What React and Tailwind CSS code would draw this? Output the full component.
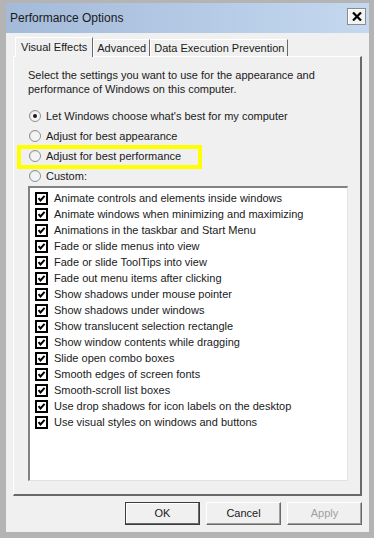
import React from 'react';

const FONT = { fontFamily: '"Liberation Sans", Arial, sans-serif' };

const effects = [
  'Animate controls and elements inside windows',
  'Animate windows when minimizing and maximizing',
  'Animations in the taskbar and Start Menu',
  'Fade or slide menus into view',
  'Fade or slide ToolTips into view',
  'Fade out menu items after clicking',
  'Show shadows under mouse pointer',
  'Show shadows under windows',
  'Show translucent selection rectangle',
  'Show window contents while dragging',
  'Slide open combo boxes',
  'Smooth edges of screen fonts',
  'Smooth-scroll list boxes',
  'Use drop shadows for icon labels on the desktop',
  'Use visual styles on windows and buttons',
];

const radios = [
  { label: "Let Windows choose what's best for my computer", checked: true },
  { label: 'Adjust for best appearance' },
  { label: 'Adjust for best performance' },
  { label: 'Custom:' },
];

// radio circle, windows 7 style
const Radio = ({ checked }) => (
  <span className="w-[12px] h-[12px] rounded-full border border-[#8e8f8f] bg-gradient-to-br from-[#dcdcdc] to-[#ffffff] flex items-center justify-center shrink-0">
    <span className="w-[8px] h-[8px] rounded-full bg-[#f4f4f4] flex items-center justify-center">
      {checked && <span className="w-[4px] h-[4px] rounded-full bg-[#1a1a1a]" />}
    </span>
  </span>
);

const CheckBox = () => (
  <svg width="13" height="13" viewBox="0 0 13 13" className="shrink-0">
    <rect x="1" y="1" width="11" height="11" fill="#fff" stroke="#000" strokeWidth="2" />
    <path d="M3.5 6.2 L5.5 8.5 L9.6 3.8" fill="none" stroke="#000" strokeWidth="2" />
  </svg>
);

const Tab = ({ label, active }) => (
  <div
    className={
      active
        ? 'h-[20px] px-[5px] flex items-center bg-[#f0f0f0] border-t border-l border-white border-r border-r-[#696969] -mb-px relative z-10 ml-[2px]'
        : 'h-[17px] px-[3px] flex items-center bg-[#f0f0f0] border-t border-l border-white border-r border-r-[#696969] self-end'
    }
  >
    <span className="text-[11px] text-[#1a1a1a] leading-none">{label}</span>
  </div>
);

const Button = ({ children, def, disabled }) => (
  <div
    className={
      'w-[75px] h-[23px] flex items-center justify-center bg-[#f0f0f0] text-[11px] ' +
      (def
        ? 'border border-[#3c3c3c] shadow-[inset_-1px_-1px_0_#696969,inset_1px_1px_0_#ffffff]'
        : 'border-t border-l border-white border-r border-b border-r-[#696969] border-b-[#696969] shadow-[inset_-1px_-1px_0_#a0a0a0]') +
      (disabled ? ' text-[#a0a0a0]' : ' text-[#1a1a1a]')
    }
  >
    {children}
  </div>
);

export default function App() {
  return (
    <div
      className="w-[374px] h-[538px] bg-[#b4b4b4] pt-[3px] pl-[6px] pr-[5px] pb-[6px] flex flex-col"
      style={FONT}
    >
      {/* title bar */}
      <div className="h-[30px] bg-gradient-to-r from-[#a3bad9] to-[#c4d8ef] flex items-center justify-between pl-[4px] pr-[3px]">
        <span className="text-[12px] text-[#1a1a1a]">Performance Options</span>
        <div className="w-[19px] h-[17px] -mt-[3px] bg-[#f2f2f2] border border-[#8c8c8c] shadow-[inset_1px_1px_0_#ffffff] flex items-center justify-center">
          <svg width="10" height="9" viewBox="0 0 10 9">
            <path d="M1 0.5 L9 8.5 M9 0.5 L1 8.5" stroke="#000" strokeWidth="2.2" />
          </svg>
        </div>
      </div>

      {/* body */}
      <div className="flex-1 bg-[#f0f0f0] px-[7px] pt-[3px] flex flex-col">
        <div className="flex h-[20px] items-end">
          <Tab label="Visual Effects" active />
          <Tab label="Advanced" />
          <Tab label="Data Execution Prevention" />
        </div>

        <div className="relative h-[440px] border-t border-l border-white border-r-2 border-b-2 border-r-[#696969] border-b-[#696969] pl-[14px] pt-[11px]">
          <p className="text-[11px] leading-[14px] text-[#1a1a1a] w-[300px]">
            Select the settings you want to use for the appearance and performance of Windows on this computer.
          </p>

          <div className="mt-[10px] flex flex-col">
            {radios.map((r) => (
              <div key={r.label} className="h-[20px] flex items-center pl-[1px]">
                <Radio checked={r.checked} />
                <span className="ml-[5px] text-[11px] text-[#1a1a1a]">{r.label}</span>
              </div>
            ))}
          </div>

          {/* yellow highlight around "best performance" */}
          <div className="absolute left-[3px] top-[88px] w-[185px] h-[24px] border-[4px] border-[#ffff00]" />

          <div className="w-[320px] h-[295px] bg-white border-t-2 border-l-2 border-t-[#828282] border-l-[#828282] border-r border-b border-r-[#e3e3e3] border-b-[#e3e3e3] pt-[2px] pl-[5px]">
            {effects.map((e) => (
              <div key={e} className="h-[16px] flex items-center">
                <CheckBox />
                <span className="ml-[6px] text-[11px] text-[#1a1a1a] whitespace-nowrap">{e}</span>
              </div>
            ))}
          </div>
        </div>

        <div className="flex justify-end gap-[6px] mt-[6px]">
          <Button def>OK</Button>
          <Button>Cancel</Button>
          <Button disabled>Apply</Button>
        </div>
      </div>
    </div>
  );
}
